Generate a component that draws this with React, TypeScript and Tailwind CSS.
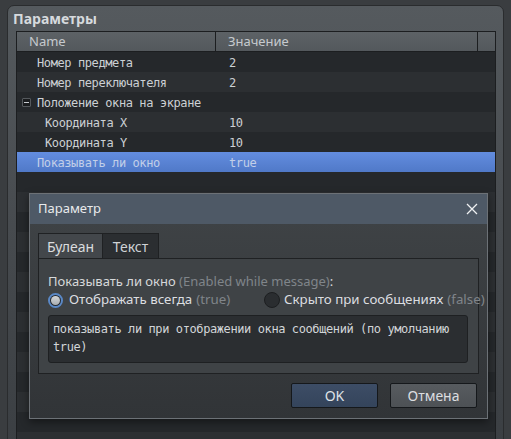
import React from "react";

const SANS = "font-['Noto_Sans','DejaVu_Sans',sans-serif]";
const MONO = "font-['DejaVu_Sans_Mono','Liberation_Mono',monospace]";

type Row = { name: string; value: string; indent?: number; group?: boolean; selected?: boolean };

const ROWS: Row[] = [
  { name: "Номер предмета", value: "2" },
  { name: "Номер переключателя", value: "2" },
  { name: "Положение окна на экране", value: "", group: true },
  { name: "Координата X", value: "10", indent: 1 },
  { name: "Координата Y", value: "10", indent: 1 },
  { name: "Показывать ли окно", value: "true", selected: true },
];

function TableRow({ row, index }: { row: Row; index: number }) {
  const bg = row.selected
    ? "bg-gradient-to-b from-[#638ddf] to-[#5079c8] text-[#c2cfe8]"
    : index % 2 === 0
    ? "bg-[#25282b] text-[#ccd0d4]"
    : "bg-[#2c2f32] text-[#ccd0d4]";
  return (
    <div className={`flex h-[20px] shrink-0 items-center pt-[2px] ${bg} ${MONO} text-[12px] tracking-[-0.4px]`}>
      <div className="relative flex h-full w-[199px] shrink-0 items-center">
        {row.group && (
          <span className="absolute left-[5px] top-[4px] flex h-[9px] w-[9px] items-center justify-center rounded-[1px] border border-[#55595d] bg-[#1b1d1f]">
            <span className="block h-[1px] w-[5px] bg-[#c8ccd0]" />
          </span>
        )}
        <span className={row.indent ? "pl-[28px]" : "pl-[20px]"}>{row.name}</span>
      </div>
      <div className="pl-[13px]">{row.value}</div>
    </div>
  );
}

function EmptyRow({ index }: { index: number }) {
  return <div className={`h-[20px] shrink-0 ${index % 2 === 0 ? "bg-[#25282b]" : "bg-[#2c2f32]"}`} />;
}

function Dialog() {
  return (
    <div className={`absolute left-[29px] top-[193px] flex h-[226px] w-[459px] flex-col overflow-hidden border border-[#6c7176] bg-gradient-to-b from-[#404447] to-[#313437] shadow-[0_3px_8px_rgba(0,0,0,0.45)] ${SANS}`}>
      <div className="flex h-[30px] shrink-0 items-center justify-between bg-[#4e5966] pl-[8px] pr-[9px] text-[13px] text-[#e8eaec]">
        <span>Параметр</span>
        <svg width="12" height="12" viewBox="0 0 12 12">
          <path d="M1 1L11 11M11 1L1 11" stroke="#eef0f2" strokeWidth="1.3" />
        </svg>
      </div>
      <div className="flex flex-col px-[8px] pt-[9px]">
        <div className="flex h-[25px] items-stretch">
          <div className="flex w-[65px] items-center justify-center border border-b-0 border-[#1f2123] bg-[#43474b] text-[14px] text-[#dadcde]">
            Булеан
          </div>
          <div className="flex w-[56px] items-center justify-center border border-b-0 border-l-0 border-[#1f2123] bg-[#2b2e31] text-[14px] text-[#cfd2d5]">
            Текст
          </div>
        </div>
        <div className="flex h-[116px] w-[441px] flex-col border border-[#1f2123] bg-[#3f4346] pl-[9px] pr-[10px] pt-[13px]">
          <div className="h-[18px] text-[13px] leading-[18px] text-[#d6d8da] whitespace-nowrap">
            Показывать ли окно <span className="text-[#80858a]">(Enabled while message)</span>:
          </div>
          <div className="flex h-[20px] items-center text-[13.3px] whitespace-nowrap">
            <div className="flex w-[216px] shrink-0 items-center">
              <span className="flex h-[15px] w-[15px] shrink-0 items-center justify-center rounded-full border-2 border-[#5a88c6] bg-[#262a2e]">
                <span className="block h-[9px] w-[9px] rounded-full bg-gradient-to-b from-[#d4d6d8] to-[#a9adb1]" />
              </span>
              <span className="ml-[6px] text-[#dcdee0]">Отображать всегда</span>
              <span className="ml-[4px] text-[#80858a]">(true)</span>
            </div>
            <div className="flex shrink-0 items-center">
              <span className="block h-[16px] w-[16px] shrink-0 rounded-full border border-[#1c1e20] bg-[#2a2d30]" />
              <span className="ml-[4px] text-[#dcdee0]">Скрыто при сообщениях</span>
              <span className="ml-[4px] text-[#80858a]">(false)</span>
            </div>
          </div>
          <div className={`mt-[5px] h-[48px] w-[420px] shrink-0 rounded-[3px] border border-[#1e2022] bg-[#2b2e31] px-[4px] pt-[4px] ${MONO} text-[12px] tracking-[-0.4px] leading-[18px] text-[#d2d5d8]`}>
            показывать ли при отображении окна сообщений (по умолчанию true)
          </div>
        </div>
      </div>
      <div className="mt-[9px] flex justify-end gap-[12px] pr-[10px]">
        <button className="flex h-[25px] w-[87px] items-center justify-center rounded-[2px] border border-[#15181b] bg-gradient-to-b from-[#3d4d66] to-[#34445b] text-[14px] text-[#dfe3e8]">
          OK
        </button>
        <button className="flex h-[25px] w-[87px] items-center justify-center rounded-[2px] border border-[#15181b] bg-gradient-to-b from-[#575b5f] to-[#4d5155] text-[14px] text-[#dcdee0]">
          Отмена
        </button>
      </div>
    </div>
  );
}

export default function App() {
  return (
    <div className={`relative h-[439px] w-[511px] overflow-hidden bg-[#3a3d40] ${SANS}`}>
      <div className="ml-[7px] mt-[5px] flex h-[440px] w-[497px] flex-col rounded-t-[7px] border border-[#2a2c2e] bg-gradient-to-b from-[#555a5e] via-[#474b4f] to-[#3b3f43]">
        <div className="h-[25px] shrink-0 pl-[5px] pt-[3px] text-[14px] font-bold leading-[19px] text-[#d6dadd]">Параметры</div>
        <div className="ml-[8px] flex w-[480px] flex-1 flex-col overflow-hidden border border-[#1c1e20] bg-[#25282b]">
          <div className="flex h-[20px] shrink-0 border-b border-[#1c1e20] bg-gradient-to-b from-[#5d6266] to-[#53585c] text-[13px] text-[#c6cace]">
            <div className="flex w-[199px] items-center border-r border-[#1c1e20] pl-[12px]">Name</div>
            <div className="flex w-[262px] items-center border-r border-[#1c1e20] pl-[12px]">Значение</div>
            <div className="flex-1" />
          </div>
          {ROWS.map((r, i) => (
            <TableRow key={i} row={r} index={i} />
          ))}
          {Array.from({ length: 16 }).map((_, i) => (
            <EmptyRow key={i} index={i + ROWS.length} />
          ))}
        </div>
      </div>
      <Dialog />
    </div>
  );
}
